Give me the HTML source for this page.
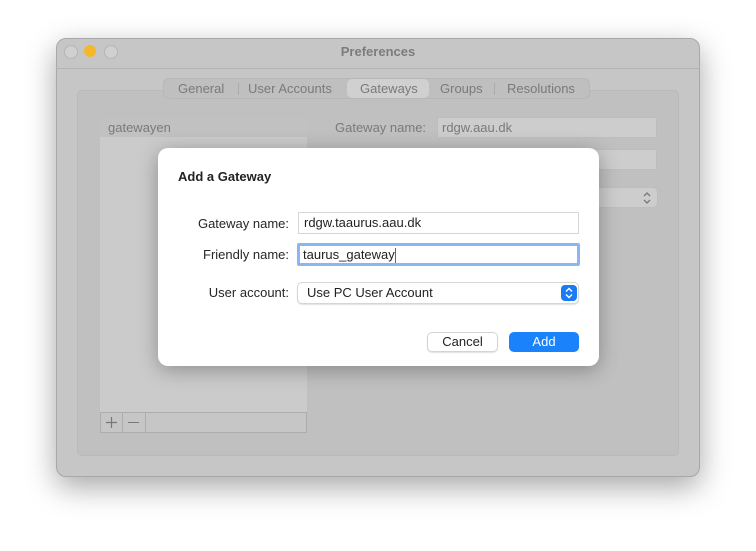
<!DOCTYPE html>
<html><head><style>
body{margin:0;width:756px;height:551px;background:#fff;position:relative;overflow:hidden;font-family:"Liberation Sans",sans-serif;}
.abs{position:absolute}
.win{left:56px;top:38px;width:644px;height:439px;background:#c6c6c6;border-radius:10px;box-shadow:0 10px 30px rgba(0,0,0,.35);border:1px solid #a8a8a8;box-sizing:border-box;}
.t{font-size:13px;color:#7a7a7a}
.field{background:#cdcdcd;border:1px solid #bdbdbd;box-sizing:border-box}
.dlg{left:158px;top:148px;width:441px;height:218px;background:#fff;border-radius:10px;box-shadow:0 4px 20px rgba(0,0,0,.3)}
.lbl{font-size:13px;color:#262626;text-align:right;width:130px}
.in{background:#fff;border:1px solid #d6d6d6;box-sizing:border-box;font-size:13px;color:#222;padding-left:5px;line-height:20px}
</style></head><body>
<div class="abs win"></div>
<div class="abs" style="left:64px;top:45px;width:12px;height:12px;border-radius:50%;background:#d0d0d0;border:0.5px solid #b5b5b5"></div>
<div class="abs" style="left:84px;top:45px;width:12px;height:12px;border-radius:50%;background:#f5b82a"></div>
<div class="abs" style="left:104px;top:45px;width:12px;height:12px;border-radius:50%;background:#d0d0d0;border:0.5px solid #b5b5b5"></div>
<div class="abs" style="left:56px;top:44px;width:644px;text-align:center;font-size:13px;font-weight:bold;color:#7c7c7c">Preferences</div>
<div class="abs" style="left:56px;top:68px;width:644px;height:1px;background:#b3b3b3"></div>
<div class="abs" style="left:77px;top:90px;width:602px;height:366px;background:#c0c0c0;border-radius:5px;border:1px solid #bababa;box-sizing:border-box"></div>
<div class="abs" style="left:163px;top:78px;width:427px;height:21px;background:#bfbfbf;border-radius:6px;border:1px solid #b7b7b7;box-sizing:border-box"></div>
<div class="abs" style="left:347px;top:79px;width:82px;height:19px;background:#d0d0d0;border-radius:5px"></div>
<div class="abs t" style="left:178px;top:81px">General</div>
<div class="abs" style="left:238px;top:83px;width:1px;height:12px;background:#ababab"></div>
<div class="abs t" style="left:248px;top:81px">User Accounts</div>
<div class="abs t" style="left:360px;top:81px">Gateways</div>
<div class="abs t" style="left:440px;top:81px">Groups</div>
<div class="abs" style="left:494px;top:83px;width:1px;height:12px;background:#ababab"></div>
<div class="abs t" style="left:507px;top:81px">Resolutions</div>
<div class="abs" style="left:100px;top:118px;width:207px;height:295px;background:#cbcbcb"></div>
<div class="abs" style="left:100px;top:118px;width:207px;height:19px;background:#c1c1c1"></div>
<div class="abs t" style="left:108px;top:120px">gatewayen</div>
<div class="abs" style="left:100px;top:412px;width:207px;height:21px;border:1px solid #adadad;box-sizing:border-box;background:#c6c6c6"></div>
<div class="abs" style="left:122px;top:412px;width:1px;height:21px;background:#adadad"></div>
<div class="abs" style="left:145px;top:412px;width:1px;height:21px;background:#adadad"></div>
<svg class="abs" style="left:105px;top:416px" width="13" height="13"><path d="M6.5 1V12M1 6.5H12" stroke="#777" stroke-width="1.2"/></svg>
<div class="abs" style="left:128px;top:422px;width:11px;height:1px;background:#7a7a7a"></div>
<div class="abs t" style="left:335px;top:120px">Gateway name:</div>
<div class="abs field" style="left:437px;top:117px;width:220px;height:21px"></div>
<div class="abs t" style="left:442px;top:120px">rdgw.aau.dk</div>
<div class="abs field" style="left:437px;top:149px;width:220px;height:21px"></div>
<div class="abs field" style="left:437px;top:187px;width:221px;height:21px;border-radius:5px"></div>
<svg class="abs" style="left:642px;top:191px" width="10" height="14"><path d="M2 5L5 2L8 5M2 9L5 12L8 9" stroke="#777" stroke-width="1.3" fill="none"/></svg>
<div class="abs dlg"></div>
<div class="abs" style="left:178px;top:169px;font-size:13px;font-weight:bold;color:#222">Add a Gateway</div>
<div class="abs lbl" style="left:159px;top:216px">Gateway name:</div>
<div class="abs in" style="left:298px;top:212px;width:281px;height:22px">rdgw.taaurus.aau.dk</div>
<div class="abs lbl" style="left:159px;top:247px">Friendly name:</div>
<div class="abs in" style="left:297px;top:243px;width:283px;height:23px;border:3px solid #8ab6f3;padding-left:3px;line-height:17px;border-radius:2px">taurus_gateway<span style="display:inline-block;width:1px;height:15px;background:#1a73e8;vertical-align:middle"></span></div>
<div class="abs lbl" style="left:159px;top:285px">User account:</div>
<div class="abs in" style="left:297px;top:282px;width:282px;height:22px;border-radius:5px;padding-left:9px;box-shadow:0 1px 1px rgba(0,0,0,.12)">Use PC User Account</div>
<svg class="abs" style="left:561px;top:285px" width="16" height="16"><rect width="16" height="16" rx="4" fill="#1a7bf2"/><path d="M5 6.5L8 3.5L11 6.5M5 9.5L8 12.5L11 9.5" stroke="#fff" stroke-width="1.4" fill="none"/></svg>
<div class="abs" style="left:427px;top:332px;width:71px;height:20px;border:1px solid #d4d4d4;box-sizing:border-box;border-radius:5px;text-align:center;font-size:13px;line-height:18px;color:#222;box-shadow:0 1px 1px rgba(0,0,0,.12)">Cancel</div>
<div class="abs" style="left:509px;top:332px;width:70px;height:20px;background:#1a82fb;border-radius:5px;text-align:center;font-size:13px;line-height:20px;color:#fff">Add</div>
</body></html>
